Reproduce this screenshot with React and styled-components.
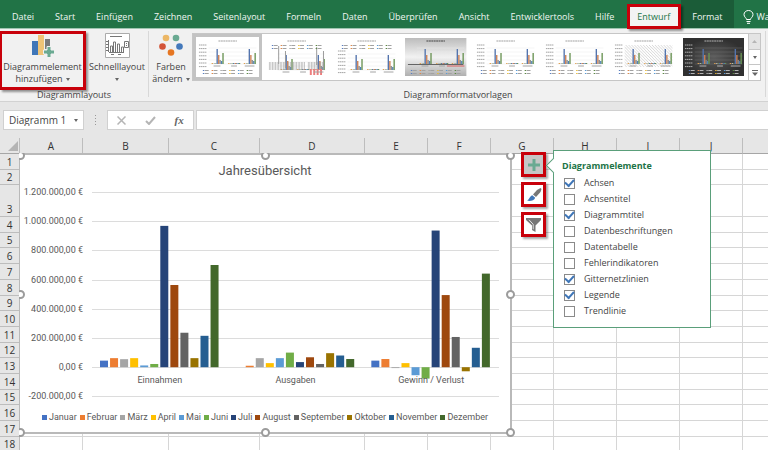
import React from "react";
import styled, { createGlobalStyle } from "styled-components";

const GlobalStyle = createGlobalStyle`
  * {
    box-sizing: border-box;
  }

  body {
    margin: 0;
    background: #fff;
    color: #444;
    font-family: "Open Sans", "Noto Sans", sans-serif;
    font-size: 9px;
    line-height: 12px;
    overflow: hidden;
  }

  button,
  input {
    font: inherit;
    color: inherit;
    margin: 0;
    padding: 0;
  }

  svg {
    display: block;
  }
`;

const Window = styled.div`
  display: flex;
  flex-direction: column;
  height: 100vh;
  overflow: hidden;
`;

/* ---------- tabs ---------- */

const TabBar = styled.nav`
  display: flex;
  height: 29px;
  flex: none;
  background: #217346;
  border-bottom: 1px solid #9fc5b0;
  padding-left: 2px;
  white-space: nowrap;
`;

const Tab = styled.button`
  flex: none;
  border: 0;
  padding: 5px 11px 0 10px;
  color: ${(p) => (p.$active ? "#217346" : "#f0f6f2")};
  background: ${(p) =>
    p.$active ? "#f3f3f3" : p.$context ? "#1b5c38" : "transparent"};
  ${(p) =>
    p.$active &&
    `
    position: relative;
    outline: 3px solid #c8000a;
    outline-offset: -3px;
    margin: 4px 0 -1px 2px;
    padding-top: 1px;
    box-shadow: 2px 2px 2px rgba(0, 0, 0, 0.4);
  `}
  ${(p) => p.$context && "padding: 5px 11px 0;"}
`;

const Search = styled.button`
  display: flex;
  align-items: center;
  gap: 3px;
  border: 0;
  padding: 5px 0 0 9px;
  color: #f0f6f2;
  background: transparent;
`;

const tabs = [
  "Datei",
  "Start",
  "Einfügen",
  "Zeichnen",
  "Seitenlayout",
  "Formeln",
  "Daten",
  "Überprüfen",
  "Ansicht",
  "Entwicklertools",
  "Hilfe",
];

/* ---------- ribbon ---------- */

const Ribbon = styled.section`
  display: flex;
  flex: none;
  height: 73px;
  background: #f1f1f1;
  border-bottom: 1px solid #d2d2d2;
`;

const Group = styled.div`
  display: flex;
  flex-direction: column;
  flex: ${(p) => (p.$grow ? "1" : "none")};
  min-width: 0;
  margin: 2px 2px 4px 0;
  border-right: 1px solid #d8d8d8;
`;

const GroupBody = styled.div`
  display: flex;
  flex: none;
  height: 59px;
`;

const GroupLabel = styled.div`
  margin-top: -1px;
  text-align: center;
`;

const BigButton = styled.button`
  display: flex;
  flex-direction: column;
  align-items: center;
  flex: none;
  width: ${(p) => p.$width};
  padding: 2px 0 0;
  border: 0;
  background: transparent;
  white-space: nowrap;

  svg {
    flex: none;
    margin-bottom: 3px;
  }
`;

const MarkedButton = styled(BigButton)`
  padding-top: 0;
  border: 3px solid #c8000a;
  border-left-width: 2px;
  box-shadow: 2px 2px 2px rgba(0, 0, 0, 0.4);
`;

const Line = styled.span`
  display: flex;
  align-items: center;
  justify-content: center;
  gap: 3px;
  height: 12px;
`;

const Caret = styled.i`
  border: solid transparent;
  border-width: 3px 2px 0;
  border-top-color: #666;
`;

const Gallery = styled.div`
  display: flex;
  flex: 1;
  height: 48px;
  margin: 2px 4px 0 1px;
  background: #fff;
  border: 1px solid #c6c6c6;
`;

const Styles = styled.div`
  display: grid;
  grid-template-columns: repeat(8, 1fr);
  flex: 1;
`;

const StyleOption = styled.button`
  padding: 1px;
  border: 3px solid ${(p) => (p.$selected ? "#c3c3c3" : "transparent")};
  background: #fff;

  svg {
    width: 100%;
    height: 100%;
  }
`;

const Scroller = styled.div`
  display: flex;
  flex-direction: column;
  width: 12px;
  border-left: 1px solid #c6c6c6;
`;

const ScrollButton = styled.button`
  display: flex;
  flex-direction: column;
  align-items: center;
  justify-content: center;
  flex: 1;
  border: 0;
  border-bottom: 1px solid #c6c6c6;
  background: ${(p) => (p.disabled ? "#e4e4e4" : "#fff")};

  &:last-child {
    border-bottom: 0;
  }
`;

/* ---------- formula bar ---------- */

const FormulaBar = styled.section`
  display: flex;
  flex: none;
  height: 36px;
  padding: 8px 0 8px 3px;
  background: #e6e6e6;
`;

const NameBox = styled.label`
  display: flex;
  align-items: center;
  width: 81px;
  padding: 0 5px;
  background: #fff;
  border: 1px solid #d0d0d0;

  input {
    flex: 1;
    min-width: 0;
    border: 0;
    background: transparent;
    font-size: 10px;
  }
`;

const Dots = styled.div`
  display: flex;
  flex-direction: column;
  align-items: center;
  justify-content: center;
  gap: 2px;
  width: 23px;

  i {
    width: 1px;
    height: 1px;
    background: #999;
  }
`;

const FormulaTools = styled.div`
  display: flex;
  align-items: center;
  justify-content: space-around;
  width: 87px;
  background: #fff;
  border: 1px solid #d0d0d0;
`;

const IconButton = styled.button`
  display: flex;
  border: 0;
  background: transparent;
`;

const Fx = styled(IconButton)`
  font-family: "Liberation Serif", serif;
  font-style: italic;
  font-weight: 700;
  font-size: 11px;
  color: #666;
`;

const FormulaInput = styled.input`
  flex: 1;
  min-width: 0;
  margin-left: 2px;
  background: #fff;
  border: 1px solid #d0d0d0;
  border-right: 0;
`;

/* ---------- sheet ---------- */

const Sheet = styled.main`
  position: relative;
  flex: 1;
  min-height: 0;
  overflow: hidden;
`;

const Cells = styled.table`
  width: 100%;
  min-width: 805px;
  table-layout: fixed;
  border-collapse: separate;
  border-spacing: 0;

  th {
    padding: 0 0 1px;
    background: #e6e6e6;
    color: #333;
    font-weight: 400;
    font-size: 10px;
    vertical-align: bottom;
    border-right: 1px solid #bdbdbd;
    border-bottom: 1px solid #bdbdbd;
  }

  thead th {
    height: 16px;
    border-bottom-color: #a6a6a6;
  }

  td {
    padding: 0;
    border-right: 1px solid #d6d6d6;
    border-bottom: 1px solid #d6d6d6;
  }
`;

const Corner = styled.i`
  display: block;
  width: 0;
  margin: 0 1px 1px auto;
  border: solid transparent;
  border-width: 0 0 10px 10px;
  border-bottom-color: #b4b4b4;
`;

const Row = styled.tr`
  height: ${(p) => p.$height}px;
  line-height: 12px;
`;

const columns = [
  ["A", 63],
  ["B", 86],
  ["C", 91],
  ["D", 105],
  ["E", 63],
  ["F", 63],
  ["G", 63],
  ["H", 63],
  ["I", 63],
  ["J", 63],
  ["", 63],
];
const rows = [
  16, 15, 32, 16, 15, 16, 16, 16, 15, 16, 16, 15, 16, 16, 15, 16, 16, 15,
];

/* ---------- chart ---------- */

const FloatingLayer = styled.div`
  position: absolute;
  inset: 15px 0 0 19px;
  overflow: hidden;
`;

const ChartObject = styled.figure`
  position: relative;
  display: flex;
  flex-direction: column;
  width: 493px;
  height: 281px;
  margin: 0;
  background: #fff;
  border: 2px solid #b9b9b9;
  border-left-width: 1px;
  color: #595959;
  font-family: Roboto, "Open Sans", sans-serif;
`;

const ChartTitle = styled.figcaption`
  padding-top: 7px;
  text-align: center;
  font-size: 13px;
  line-height: 18px;
`;

const Legend = styled.ul`
  display: flex;
  justify-content: center;
  gap: 3px;
  margin: 0;
  padding: 2px 0 0;
  list-style: none;
  white-space: nowrap;

  li {
    display: flex;
    align-items: center;
    gap: 2px;
  }
`;

const Swatch = styled.i`
  width: 5px;
  height: 5px;
  background: ${(p) => p.$color};
`;

const Handle = styled.i`
  position: absolute;
  left: ${(p) => p.$x};
  top: ${(p) => p.$y};
  width: 9px;
  height: 9px;
  margin: -4px;
  background: #fff;
  border: 2px solid #9c9c9c;
  border-radius: 50%;
`;

const series = [
  ["Januar", "#4472c4"],
  ["Februar", "#ed7d31"],
  ["März", "#a5a5a5"],
  ["April", "#ffc000"],
  ["Mai", "#5b9bd5"],
  ["Juni", "#70ad47"],
  ["Juli", "#264478"],
  ["August", "#9e480e"],
  ["September", "#636363"],
  ["Oktober", "#997300"],
  ["November", "#255e91"],
  ["Dezember", "#43682b"],
];

// values in thousands
const categories = [
  ["Einnahmen", [45, 62, 55, 62, 12, 22, 968, 563, 236, 62, 215, 700]],
  ["Ausgaben", [0, 10, 62, 28, 62, 100, 35, 68, 22, 96, 80, 56]],
  ["Gewinn / Verlust", [45, 56, -6, 28, -55, -78, 936, 494, 207, -28, 133, 641]],
];

const axis = [
  "1.200.000,00 €",
  "1.000.000,00 €",
  "800.000,00 €",
  "600.000,00 €",
  "400.000,00 €",
  "200.000,00 €",
  "0,00 €",
  "-200.000,00 €",
];

const AxisText = styled.text`
  font-size: 9px;
  fill: #595959;
`;

const PLOT_LEFT = 72;
const PLOT_WIDTH = 407;
const STEP = 29.2;
const ZERO = 12 + 6 * STEP;

const Plot = () => (
  <svg viewBox="0 0 490 229" width="100%" role="img" aria-label="Jahresübersicht">
    {axis.map((label, i) => (
      <g key={label}>
        <rect
          x={PLOT_LEFT}
          y={Math.round(12 + i * STEP)}
          width={PLOT_WIDTH}
          height="1"
          fill="#dcdcdc"
        />
        <AxisText x="63" y={Math.round(12 + i * STEP) + 3} textAnchor="end">
          {label}
        </AxisText>
      </g>
    ))}
    {categories.map(([name, values], c) => {
      const left = PLOT_LEFT + (c * PLOT_WIDTH) / 3;
      return (
        <g key={name}>
          {values.map((v, i) => {
            const h = (Math.abs(v) / 200) * STEP;
            return (
              <rect
                key={i}
                x={left + 8 + i * 10.05}
                y={v < 0 ? ZERO : ZERO - h}
                width="8"
                height={h}
                fill={series[i][1]}
              />
            );
          })}
          <AxisText x={left + PLOT_WIDTH / 6} y="203" textAnchor="middle">
            {name}
          </AxisText>
        </g>
      );
    })}
  </svg>
);

/* ---------- chart tools ---------- */

const ChartTools = styled.div`
  position: absolute;
  left: 521px;
  top: 14px;
  display: flex;
  flex-direction: column;
  gap: 5px;
`;

const ToolButton = styled.button`
  display: flex;
  align-items: center;
  justify-content: center;
  width: 25px;
  height: 25px;
  border: 3px solid #c8000a;
  background: ${(p) => (p.$pressed ? "#c6c6c6" : "#fff")};
  box-shadow: 2px 2px 2px rgba(0, 0, 0, 0.35);
`;

const Popup = styled.fieldset`
  position: absolute;
  left: 553px;
  top: 12px;
  min-width: 158px;
  margin: 0;
  padding: 9px 8px 8px;
  background: #fff;
  border: 1px solid #5a9f7a;

  &::before {
    content: "";
    position: absolute;
    left: -6px;
    top: 9px;
    width: 10px;
    height: 10px;
    background: #fff;
    border: solid #5a9f7a;
    border-width: 0 0 1px 1px;
    transform: rotate(45deg);
  }
`;

const PopupTitle = styled.h2`
  margin: 0 0 3px;
  font-size: 9px;
  line-height: 12px;
  font-weight: 700;
  color: #217346;
`;

const Option = styled.label`
  display: flex;
  align-items: center;
  gap: 9px;
  height: 16px;
  padding-left: 2px;
`;

const Check = styled.input`
  appearance: none;
  display: grid;
  place-items: center;
  width: 11px;
  height: 11px;
  border: 1px solid #8a8a8a;
  background: #fff;

  &:checked::after {
    content: "";
    width: 7px;
    height: 4px;
    margin-top: -2px;
    border: solid #3f76b8;
    border-width: 0 0 2px 2px;
    transform: rotate(-48deg);
  }
`;

const elements = [
  ["Achsen", true],
  ["Achsentitel", false],
  ["Diagrammtitel", true],
  ["Datenbeschriftungen", false],
  ["Datentabelle", false],
  ["Fehlerindikatoren", false],
  ["Gitternetzlinien", true],
  ["Legende", true],
  ["Trendlinie", false],
];

/* ---------- icons ---------- */

const BulbIcon = () => (
  <svg width="11" height="14" viewBox="0 0 11 14" fill="none" stroke="#fff">
    <path d="M3.5 9.5c0-1.7-2.5-2.3-2.5-5a4.5 4 0 0 1 9 0c0 2.7-2.5 3.3-2.5 5zM3.5 11.5h4M4 13.3h3" />
  </svg>
);

const AddElementIcon = () => (
  <svg width="24" height="24" viewBox="0 0 24 24">
    <path fill="#3f76b8" d="M1 7h6v14H1z" />
    <path fill="#efc477" d="M7 1h6v20H7z" />
    <path fill="#7b7b7b" d="M14 5h5v10h-5z" />
    <path
      fill="#6aaa92"
      stroke="#f1f1f1"
      d="M16 12.5h4v3.5h3.5v4H20v3.5h-4V20h-3.5v-4H16z"
    />
  </svg>
);

const QuickLayoutIcon = () => (
  <svg width="25" height="25" viewBox="0 0 25 25" fill="none" stroke="#777">
    <path fill="#fff" stroke="#ababab" d="M.5.5h24v24H.5z" />
    <path d="M5 3.5h12M3.5 7v12M1 8.5h2M1 11.5h2M1 14.5h2M1 17.5h2M4 19.5h15M6 21.5h3M13 21.5h3" />
    <path d="M5.5 19v-6h2v6M8.5 19V9h2v10M12.5 19v-8h2v8M16.5 19v-5h2v5" />
    <path fill="#fff" d="M19.5 8.5h4v6h-4zM21 10.5h1M21 12.5h1" />
  </svg>
);

const ColorsIcon = () => (
  <svg width="24" height="25" viewBox="0 0 24 25">
    <circle cx="7" cy="5" r="3.3" fill="#ecb765" />
    <circle cx="17" cy="5" r="3.3" fill="#6aaa92" />
    <circle cx="3.5" cy="13.5" r="3.3" fill="#d35438" />
    <circle cx="20.5" cy="13.5" r="3.3" fill="#4479bb" />
    <circle cx="12" cy="19.5" r="3.3" fill="#e67621" />
  </svg>
);

const thumbBars = [
  [-5, 1, "#e0a050"],
  [-3, 1, "#b5b5b5"],
  [-1.5, 0.6, "#7aa35a"],
  [0, 15, "#5474ad"],
  [1.6, 9, "#cf8052"],
  [3, 4, "#8a8a8a"],
  [4.6, 3, "#4f83b8"],
  [6, 11, "#6b9455"],
];
const legendColors = ["#5a7fc0", "#e08a4c", "#a5a5a5", "#e6b934", "#5b9bd5", "#5d8a45"];

const Thumb = ({ variant }) => {
  const dark = variant === 7;
  const grey = variant === 3;
  const ink = dark ? "#b4b4b4" : "#a2a2a2";
  const legendTop = variant === 1 || variant === 2;
  const base = legendTop ? 32 : 26;
  return (
    <svg viewBox="0 0 63 38" preserveAspectRatio="none">
      <defs>
        <linearGradient id="silver" x2="0" y2="1">
          <stop offset="0" stopColor="#bcbcbc" />
          <stop offset=".5" stopColor="#f2f2f2" />
          <stop offset="1" stopColor="#b0b0b0" />
        </linearGradient>
        <radialGradient id="coal">
          <stop offset="0" stopColor="#5c5c5c" />
          <stop offset="1" stopColor="#303030" />
        </radialGradient>
        <pattern id="hatch" width="3" height="3" patternUnits="userSpaceOnUse">
          <path d="M0 0l3 3" stroke="#c8c8c8" strokeWidth=".7" />
        </pattern>
      </defs>
      <rect
        width="63"
        height="38"
        fill={dark ? "url(#coal)" : grey ? "url(#silver)" : "#fff"}
      />
      {variant === 6 && <rect x="12" y="7" width="49" height="22" fill="url(#hatch)" />}
      <path d="M22 3h19" stroke={grey ? "#444" : ink} strokeWidth="1.2" strokeDasharray="2 .5" />
      {!grey && variant !== 1 && (
        <path
          d={[0, 1, 2, 3, 4, 5, 6].map((i) => `M2 ${base - 19 + i * 3.6}h8`).join("")}
          stroke={ink}
          strokeWidth="1"
          strokeDasharray="1.5 .4"
        />
      )}
      <path
        d={[0, 1, 2, 3, 4].map((i) => `M12 ${base - 16 + i * 4}h49`).join("")}
        stroke={dark ? "#707070" : "#e8e8e8"}
        strokeWidth=".5"
      />
      {[21, 38, 54].map((x, c) =>
        thumbBars.map(([dx, h, color]) => {
          const height = c === 1 ? Math.min(h, 1) : h;
          return (
            <rect
              key={`${c}${dx}`}
              x={x - 1 + dx}
              y={base - height}
              width="1.4"
              height={height}
              fill={color}
            />
          );
        })
      )}
      {variant === 1 && (
        <g stroke="#9a9a9a">
          {[3, 23, 43].map((x) => (
            <path
              key={x}
              d={`M${x} ${base - 4}h17`}
              strokeWidth="8"
              strokeDasharray=".8 .8"
              opacity=".7"
            />
          ))}
          <path d="M13 26V8M20 30V13M52 27V9M59 30V13" />
          <path d="M45 34h13" stroke="#ee7d7d" strokeWidth="6" strokeDasharray="2 1.5" />
        </g>
      )}
      {grey && <path d="M3 26.5h57" stroke="#444" strokeWidth=".8" />}
      {grey && <path d="M43 28h18" stroke="#d65a5a" />}
      <path d={`M17 ${base + 2}h7M35 ${base + 2}h6M49 ${base + 2}h${grey ? 0 : 10}`} stroke={ink} />
      {[0, 1].map((r) =>
        legendColors.map((color, i) => (
          <g key={`${r}${i}`}>
            <rect
              x={6 + i * 9}
              y={(legendTop ? 7 : 32) + r * 3}
              width="1.5"
              height="1"
              fill={color}
            />
            <rect
              x={8 + i * 9}
              y={(legendTop ? 7 : 32) + r * 3}
              width="4"
              height="1"
              fill={ink}
            />
          </g>
        ))
      )}
    </svg>
  );
};

const App = () => {
  return (
    <Window>
      <GlobalStyle />
      <TabBar>
        {tabs.map((t) => (
          <Tab key={t}>{t}</Tab>
        ))}
        <Tab $active>Entwurf</Tab>
        <Tab $context>Format</Tab>
        <Search>
          <BulbIcon />
          Wa
        </Search>
      </TabBar>

      <Ribbon>
        <Group>
          <GroupBody>
            <MarkedButton $width="86px">
              <AddElementIcon />
              <Line>Diagrammelement</Line>
              <Line>
                hinzufügen <Caret />
              </Line>
            </MarkedButton>
            <BigButton $width="62px">
              <QuickLayoutIcon />
              <Line>Schnelllayout</Line>
              <Line>
                <Caret />
              </Line>
            </BigButton>
          </GroupBody>
          <GroupLabel>Diagrammlayouts</GroupLabel>
        </Group>
        <Group $grow>
          <GroupBody>
            <BigButton $width="40px">
              <ColorsIcon />
              <Line>Farben</Line>
              <Line>
                ändern <Caret />
              </Line>
            </BigButton>
            <Gallery>
              <Styles>
                {[0, 1, 2, 3, 4, 5, 6, 7].map((i) => (
                  <StyleOption key={i} $selected={i === 0} aria-label={`Formatvorlage ${i + 1}`}>
                    <Thumb variant={i} />
                  </StyleOption>
                ))}
              </Styles>
              <Scroller>
                <ScrollButton disabled aria-label="Nach oben">
                  <svg width="5" height="3">
                    <path d="M0 3l2.5-3L5 3z" fill="#b5b5b5" />
                  </svg>
                </ScrollButton>
                <ScrollButton aria-label="Nach unten">
                  <Caret />
                </ScrollButton>
                <ScrollButton aria-label="Weitere">
                  <svg width="6" height="6">
                    <path d="M0 0h6v1H0zM0 2.5h6L3 6z" fill="#666" />
                  </svg>
                </ScrollButton>
              </Scroller>
            </Gallery>
          </GroupBody>
          <GroupLabel>Diagrammformatvorlagen</GroupLabel>
        </Group>
      </Ribbon>

      <FormulaBar>
        <NameBox>
          <input defaultValue="Diagramm 1" aria-label="Namenfeld" />
          <Caret />
        </NameBox>
        <Dots>
          <i />
          <i />
          <i />
          <i />
        </Dots>
        <FormulaTools>
          <IconButton aria-label="Abbrechen">
            <svg width="9" height="9" fill="none" stroke="#b5b5b5" strokeWidth="1.5">
              <path d="M.5.5l8 8M8.5.5l-8 8" />
            </svg>
          </IconButton>
          <IconButton aria-label="Eingeben">
            <svg width="11" height="9" fill="none" stroke="#b5b5b5" strokeWidth="2">
              <path d="M1 5l3 3 6-7" />
            </svg>
          </IconButton>
          <Fx aria-label="Funktion einfügen">fx</Fx>
        </FormulaTools>
        <FormulaInput aria-label="Bearbeitungsleiste" />
      </FormulaBar>

      <Sheet>
        <Cells>
          <colgroup>
            <col width="20" />
            {columns.map(([name, width]) => (
              <col key={name} width={width} />
            ))}
          </colgroup>
          <thead>
            <tr>
              <th>
                <Corner />
              </th>
              {columns.map(([name]) => (
                <th key={name}>{name}</th>
              ))}
            </tr>
          </thead>
          <tbody>
            {rows.map((height, r) => (
              <Row key={r} $height={height}>
                <th>{r + 1}</th>
                {columns.map(([name]) => (
                  <td key={name} />
                ))}
              </Row>
            ))}
          </tbody>
        </Cells>

        <FloatingLayer>
          <ChartObject>
            <ChartTitle>Jahresübersicht</ChartTitle>
            <Plot />
            <Legend>
              {series.map(([name, color]) => (
                <li key={name}>
                  <Swatch $color={color} />
                  {name}
                </li>
              ))}
            </Legend>
            {["0%", "50%", "100%"].map((y) =>
              ["0%", "50%", "100%"].map(
                (x) =>
                  !(x === "50%" && y === "50%") && <Handle key={x + y} $x={x} $y={y} />
              )
            )}
          </ChartObject>
        </FloatingLayer>

        <ChartTools>
          <ToolButton $pressed aria-label="Diagrammelemente">
            <svg width="12" height="12">
              <path fill="#6aaa92" d="M4.5 0h3v4.5H12v3H7.5V12h-3V7.5H0v-3h4.5z" />
            </svg>
          </ToolButton>
          <ToolButton aria-label="Diagrammformatvorlagen">
            <svg width="16" height="16" viewBox="0 0 16 16">
              <path fill="#777" d="M14.5 1l1 1-1 3-4.5 5-3-2.5L11 3z" />
              <path fill="#3f76b8" d="M6.3 8.3l2.9 2.5c-1 2.7-4.2 3.5-8.2 3C3.5 12.5 3.3 9.5 6.3 8.3z" />
            </svg>
          </ToolButton>
          <ToolButton aria-label="Diagrammfilter">
            <svg width="15" height="14" viewBox="0 0 15 14">
              <path fill="#777" d="M0 0h15v2L9.5 7.5V14L6 12V7.5L0 2z" />
              <path stroke="#fff" strokeWidth=".8" fill="none" d="M3 1.8l4.2 4.5v5" />
            </svg>
          </ToolButton>
        </ChartTools>

        <Popup>
          <PopupTitle>Diagrammelemente</PopupTitle>
          {elements.map(([name, checked]) => (
            <Option key={name}>
              <Check type="checkbox" defaultChecked={checked} />
              {name}
            </Option>
          ))}
        </Popup>
      </Sheet>
    </Window>
  );
};

export default App;
